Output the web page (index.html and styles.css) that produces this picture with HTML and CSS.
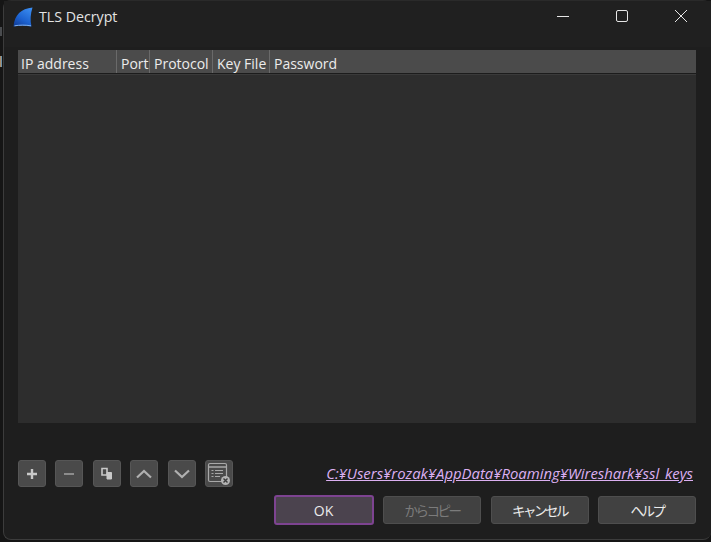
FILE: index.html
```html
<!DOCTYPE html>
<html lang="ja">
<head>
  <meta charset="UTF-8">
  <meta name="viewport" content="width=device-width, initial-scale=1.0">
  <title>TLS Decrypt</title>
  <link rel="stylesheet" href="styles.css">
</head>
<body>
  <span class="behind-mark behind-grey"></span>
  <span class="behind-mark behind-blue"></span>
  <div class="window">
    <header class="titlebar">
      <svg class="app-icon" width="20" height="20" viewBox="0 0 20 20">
        <defs>
          <linearGradient id="fin" x1="0.8" y1="0" x2="0.2" y2="1">
            <stop offset="0" stop-color="#3a8cf0"/>
            <stop offset="0.6" stop-color="#1c62d0"/>
            <stop offset="1" stop-color="#123f9c"/>
          </linearGradient>
        </defs>
        <path d="M0.500 19.500C1.500 8 8 1.500 19.500 0.500C17.500 7 17 13 18.500 19.500C12 18.500 6 18.500 0.500 19.500z" fill="url(#fin)"/>
        <path d="M1.500 18.800c5.500-.9 11-.9 16.500 0" fill="none" stroke="#7fb2ef" stroke-width="1"/>
      </svg>
      <span class="title">TLS Decrypt</span>
      <div class="window-controls">
        <svg width="14" height="14" viewBox="0 0 14 14"><path d="M1 7.500h12" stroke="#e6e6e6" fill="none"/></svg>
        <svg width="14" height="14" viewBox="0 0 14 14"><rect x="1.500" y="1.500" width="11" height="11" rx="1.500" stroke="#e6e6e6" fill="none"/></svg>
        <svg width="14" height="14" viewBox="0 0 14 14"><path d="M1 1l12 12M13 1L1 13" stroke="#e6e6e6" fill="none"/></svg>
      </div>
    </header>

    <main class="content">
      <section class="table-box">
        <div class="table-head">
          <div class="col col-ip">IP address</div>
          <div class="col col-port">Port</div>
          <div class="col col-proto">Protocol</div>
          <div class="col col-key">Key File</div>
          <div class="col col-pass">Password</div>
        </div>
      </section>

      <div class="toolbar">
        <button class="tool-btn" aria-label="add">
          <svg width="14" height="14" viewBox="0 0 14 14"><path d="M7 2v10M2 7h10" stroke="#c9c9c9" stroke-width="2.400" fill="none"/></svg>
        </button>
        <button class="tool-btn" aria-label="remove">
          <svg width="14" height="14" viewBox="0 0 14 14"><path d="M2 7h10" stroke="#8c8c8c" stroke-width="2" fill="none"/></svg>
        </button>
        <button class="tool-btn" aria-label="copy">
          <svg width="14" height="14" viewBox="0 0 14 14"><path d="M2 1.500h5v6.500H2z" fill="none" stroke="#c9c9c9" stroke-width="1.600"/><path d="M7 5.500h4.500V12H7z" fill="#c9c9c9" stroke="#c9c9c9"/></svg>
        </button>
        <button class="tool-btn" aria-label="up">
          <svg width="18" height="14" viewBox="0 0 18 14"><path d="M2 10.500l7-6.500 7 6.500" stroke="#b0b0b0" stroke-width="2.200" fill="none"/></svg>
        </button>
        <button class="tool-btn" aria-label="down">
          <svg width="18" height="14" viewBox="0 0 18 14"><path d="M2 3.500l7 6.500 7-6.500" stroke="#b0b0b0" stroke-width="2.200" fill="none"/></svg>
        </button>
        <button class="tool-btn" aria-label="clear">
          <svg width="24" height="24" viewBox="0 0 24 24">
            <rect x="1.500" y="1.500" width="18" height="18" rx="1.500" fill="none" stroke="#a8a8a8" stroke-width="1.200"/>
            <path d="M2 5h17" stroke="#a8a8a8" stroke-width="1.500"/>
            <path d="M4.500 8.500h2M8 8.500h8M4.500 11.500h2M8 11.500h8M4.500 14.500h2M8 14.500h5" stroke="#a8a8a8" stroke-width="1.200"/>
            <circle cx="18.500" cy="18.500" r="4.500" fill="#b4b4b4"/>
            <path d="M16.500 16.500l4 4M20.500 16.500l-4 4" stroke="#3c3c3c" stroke-width="1.400"/>
          </svg>
        </button>
        <a class="path-link" href="#">C:¥Users¥rozak¥AppData¥Roaming¥Wireshark¥ssl_keys</a>
      </div>

      <div class="dialog-buttons">
        <button class="btn btn-default">OK</button>
        <button class="btn btn-ja" disabled>からコピー</button>
        <button class="btn btn-ja">キャンセル</button>
        <button class="btn btn-ja">ヘルプ</button>
      </div>
    </main>
  </div>
</body>
</html>
```

FILE: styles.css
```css
html, body {
  height: 100%;
}

body {
  margin: 0;
  background: #151515;
  font-family: "Open Sans", "Noto Sans CJK JP", sans-serif;
  color: #e8e8e8;
  overflow: hidden;
  padding: 0 0 2px 3px;
  box-sizing: border-box;
  position: relative;
}

.behind-mark {
  position: absolute;
  left: 0;
  width: 2px;
}

.behind-grey {
  top: 27px;
  height: 9px;
  background: #4a4c4f;
}

.behind-blue {
  top: 56px;
  height: 11px;
  background: linear-gradient(90deg, #c98a4a, #4f94c8);
}

.window {
  height: 100%;
  box-sizing: border-box;
  border: 1px solid #3c3c3c;
  border-top-color: #2a2a2a;
  border-right: 0;
  border-radius: 8px;
  background: #1e1e1e;
  display: flex;
  flex-direction: column;
}

.titlebar {
  height: 46px;
  flex: none;
  display: flex;
  align-items: flex-start;
  padding: 6px 0 0 9px;
  box-sizing: border-box;
  background: #202020;
}

.app-icon {
  flex: none;
}

.title {
  margin-left: 6px;
  font-size: 14.200px;
  line-height: 20px;
  color: #e4e4e4;
}

.window-controls {
  margin-left: auto;
  display: flex;
  gap: 45px;
  padding: 2px 23px 0 0;
}

.content {
  flex: 1;
  display: flex;
  flex-direction: column;
  padding: 3px 14px 14px 14px;
  min-height: 0;
}

.table-box {
  height: 373px;
  flex: none;
  background: #2d2d2d;
  width: 678px;
}

.table-head {
  height: 23px;
  display: flex;
  background: #4b4b4b;
  border-bottom: 1px solid #1c1c1c;
  font-size: 14px;
  line-height: 27px;
  color: #ececec;
  box-shadow: 0 1px 0 #3a3a3a;
}

.col {
  box-sizing: border-box;
  padding-left: 3px;
  border-right: 1px solid #6a6a6a;
  margin-right: 1px;
  white-space: nowrap;
  overflow: hidden;
}

.col-ip { width: 99px; }
.col-port { width: 32px; }
.col-proto { width: 62px; }
.col-key { width: 56px; }
.col-pass { flex: 1; border-right: 0; margin-right: 0; }

.toolbar {
  margin-top: 37px;
  height: 27px;
  flex: none;
  display: flex;
  align-items: center;
  gap: 9.400px;
  width: 678px;
}

.tool-btn {
  width: 28px;
  height: 27px;
  padding: 0;
  display: flex;
  align-items: center;
  justify-content: center;
  flex: none;
  background: #4a4a4a;
  border: 1px solid #565656;
  border-radius: 3px;
}

.path-link {
  margin-left: auto;
  margin-right: 3px;
  margin-bottom: 2px;
  font-size: 14.900px;
  font-style: italic;
  color: #dcb0f2;
  white-space: nowrap;
}

.dialog-buttons {
  margin-top: 8px;
  display: flex;
  justify-content: flex-end;
  align-items: center;
  gap: 9.500px;
  width: 678px;
}

.btn {
  width: 98px;
  height: 28px;
  padding: 0;
  background: #414141;
  border: 1px solid #4e4e4e;
  border-radius: 3px;
  color: #ececec;
  font-family: "Open Sans", "Noto Sans CJK JP", sans-serif;
  font-size: 14px;
}

.btn-ja {
  font-size: 13.500px;
  letter-spacing: -2.500px;
}

.btn:disabled {
  color: #7b7b7b;
}

.btn-default {
  width: 100px;
  height: 30px;
  background: #4b434e;
  border: 2px solid #7d4391;
}
```
